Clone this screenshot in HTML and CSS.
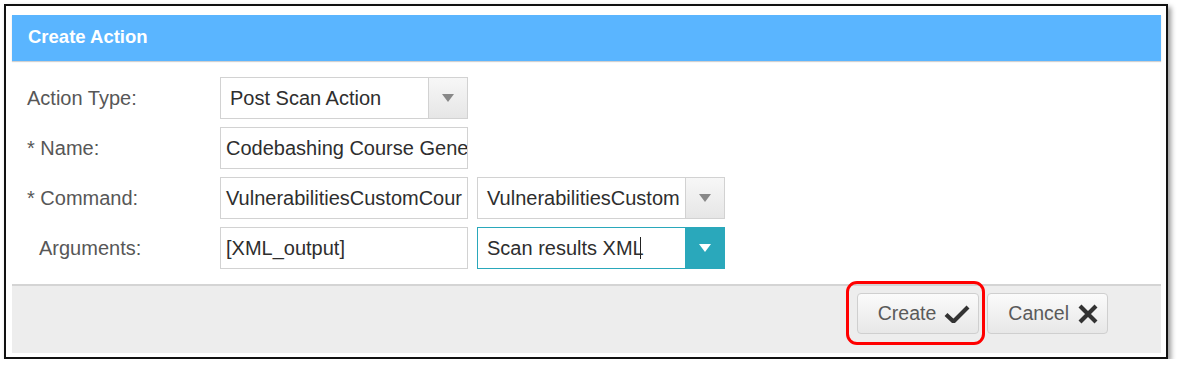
FILE: index.html
```html
<!DOCTYPE html>
<html>
<head>
    <meta charset="utf-8">
    <link rel="stylesheet" href="styles.css">
</head>
<body>
<div class="frame">
    <div class="dialog-header">Create Action</div>

    <div class="dialog-body">
        <div class="form-row">
            <label class="form-label">Action Type:</label>
            <div class="combo">
                <span class="combo-text">Post Scan Action</span>
                <span class="combo-button"><span class="arrow"></span></span>
            </div>
        </div>

        <div class="form-row">
            <label class="form-label">* Name:</label>
            <div class="text-field">Codebashing Course Gene</div>
        </div>

        <div class="form-row">
            <label class="form-label">* Command:</label>
            <div class="text-field">VulnerabilitiesCustomCour</div>
            <div class="combo">
                <span class="combo-text">VulnerabilitiesCustom</span>
                <span class="combo-button"><span class="arrow"></span></span>
            </div>
        </div>

        <div class="form-row">
            <label class="form-label indented">Arguments:</label>
            <div class="text-field">[XML_output]</div>
            <div class="combo focused">
                <span class="combo-text">Scan results XML<span class="caret"></span></span>
                <span class="combo-button"><span class="arrow"></span></span>
            </div>
        </div>
    </div>

    <div class="dialog-footer">
        <div class="highlight">
            <button class="btn">
                Create
                <svg class="btn-icon check" viewBox="0 0 26 18">
                    <path d="M2 9.5l7.5 7L24 2" fill="none" stroke="currentColor" stroke-width="4.2" stroke-linejoin="miter"/>
                </svg>
            </button>
        </div>
        <button class="btn">
            Cancel
            <svg class="btn-icon cross" viewBox="0 0 22 22">
                <path d="M3 3l16 16M19 3L3 19" fill="none" stroke="currentColor" stroke-width="4.2"/>
            </svg>
        </button>
    </div>
</div>
</body>
</html>
```

FILE: styles.css
```css
* {
    margin: 0;
    padding: 0;
    box-sizing: border-box;
}

body {
    background: #fff;
    font-family: 'Liberation Sans', Arial, sans-serif;
    font-size: 20px;
}

.frame {
    width: 1164px;
    height: 355px;
    margin: 4px 0 0 4px;
    border: 2px solid #111;
    padding: 9px 5px 4px 6px;
    background: #fff;
    box-shadow: 3px 3px 5px rgba(0, 0, 0, 0.4);
    display: flex;
    flex-direction: column;
}

.dialog-header {
    height: 46px;
    flex: none;
    background: #5ab5ff;
    color: #fff;
    font-weight: bold;
    font-size: 18.5px;
    line-height: 44px;
    padding-left: 16px;
    box-shadow: 0 1px 1px rgba(0, 0, 0, 0.18);
}

.dialog-body {
    display: flex;
    flex-direction: column;
    gap: 8px;
    padding: 16px 0 15px 15px;
}

.form-row {
    display: flex;
    align-items: center;
    gap: 9px;
    height: 42px;
}

.form-label {
    width: 184px;
    color: #575757;
}

.form-label.indented {
    padding-left: 12px;
}

.text-field,
.combo {
    width: 248px;
    height: 42px;
    border: 1px solid #d2d2d2;
    background: #fff;
    color: #2e2e2e;
    white-space: nowrap;
    overflow: hidden;
}

.text-field {
    padding: 0 2px 0 5px;
    line-height: 40px;
}

.combo {
    display: flex;
}

.combo-text {
    flex: 1;
    overflow: hidden;
    padding-left: 9px;
    line-height: 40px;
}

.combo-button {
    width: 39px;
    flex: none;
    border-left: 1px solid #d2d2d2;
    background: linear-gradient(#f7f7f7, #e6e6e6);
    display: flex;
    align-items: center;
    justify-content: center;
}

.arrow {
    width: 0;
    height: 0;
    border-left: 6px solid transparent;
    border-right: 6px solid transparent;
    border-top: 8px solid #888;
}

.combo.focused {
    border-color: #2aa8bb;
}

.combo.focused .combo-button {
    background: #2aa8bb;
    border-left-color: #2aa8bb;
}

.combo.focused .arrow {
    border-top-color: #fff;
}

.caret {
    display: inline-block;
    width: 1px;
    height: 22px;
    background: #222;
    vertical-align: -4px;
    margin-left: -4px;
}

.dialog-footer {
    flex: 1;
    background: #ededed;
    border-top: 2px solid #d4d4d4;
    display: flex;
    justify-content: flex-end;
    align-items: flex-start;
    gap: 8px;
    padding: 7px 53px 0 0;
}

.highlight {
    position: relative;
}

/* red annotation drawn round the Create button */
.highlight::before {
    content: "";
    position: absolute;
    left: -11px;
    top: -12px;
    right: -6px;
    bottom: -11px;
    border: 3px solid #f00;
    border-radius: 11px;
}

.btn {
    height: 41px;
    display: flex;
    align-items: center;
    gap: 8px;
    padding: 0 8px 0 20px;
    border: 1px solid #cfcfcf;
    border-radius: 4px;
    background: linear-gradient(#fbfbfb, #e7e7e7);
    font-family: 'Liberation Sans', Arial, sans-serif;
    font-size: 19.5px;
    color: #5a5a5a;
}

.btn-icon {
    color: #333;
}

.check {
    width: 26px;
    height: 18px;
}

.cross {
    width: 22px;
    height: 22px;
}
```
